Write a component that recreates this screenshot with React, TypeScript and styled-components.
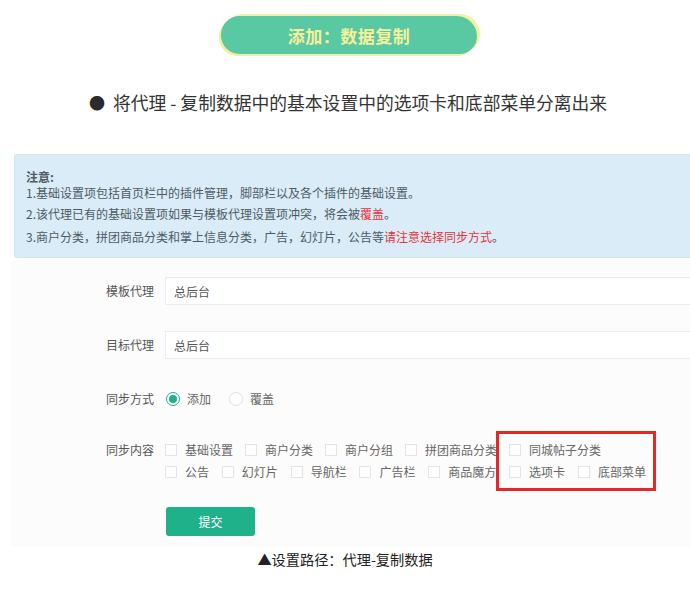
import React from 'react';
import styled, { createGlobalStyle } from 'styled-components';

const GlobalStyle = createGlobalStyle`
  html, body {
    margin: 0;
    padding: 0;
    background: #ffffff;
    overflow: hidden;
  }
  body {
    font-family: "Noto Sans CJK SC", "Noto Sans", sans-serif;
    color: #333;
  }
`;

type CheckItem = { name: string; id: number };

const rowOne: CheckItem[] = [
    { name: '基础设置', id: 1 },
    { name: '商户分类', id: 2 },
    { name: '商户分组', id: 3 },
    { name: '拼团商品分类', id: 4 },
    { name: '同城帖子分类', id: 5 },
];

const rowTwo: CheckItem[] = [
    { name: '公告', id: 6 },
    { name: '幻灯片', id: 7 },
    { name: '导航栏', id: 8 },
    { name: '广告栏', id: 9 },
    { name: '商品魔方', id: 10 },
    { name: '选项卡', id: 11 },
    { name: '底部菜单', id: 12 },
];

const App = () => {
    return (
        <Page>
            <GlobalStyle />
            <TitleWrap>
                <TitlePill>添加：数据复制</TitlePill>
            </TitleWrap>
            <Bullet><Dot>●</Dot>将代理 - 复制数据中的基本设置中的选项卡和底部菜单分离出来</Bullet>

            <Shot>
                <Notice>
                    <NoticeTitle>注意:</NoticeTitle>
                    <NoticeLine first>1.基础设置项包括首页栏中的插件管理，脚部栏以及各个插件的基础设置。</NoticeLine>
                    <NoticeLine>2.该代理已有的基础设置项如果与模板代理设置项冲突，将会被<Red>覆盖</Red>。</NoticeLine>
                    <NoticeLine>3.商户分类，拼团商品分类和掌上信息分类，广告，幻灯片，公告等<Red>请注意选择同步方式</Red>。</NoticeLine>
                </Notice>

                <Form>
                    <Row>
                        <Label>模板代理</Label>
                        <Input>总后台</Input>
                    </Row>
                    <Row>
                        <Label>目标代理</Label>
                        <Input>总后台</Input>
                    </Row>
                    <Row>
                        <Label>同步方式</Label>
                        <Choices>
                            <Radio checked />
                            <OptionText>添加</OptionText>
                            <Radio />
                            <OptionText>覆盖</OptionText>
                        </Choices>
                    </Row>
                    <Row top>
                        <Label>同步内容</Label>
                        <CheckGroup>
                            {[rowOne, rowTwo].map((line, i) => (
                                <CheckLine key={i} wide={i === 1}>
                                    {line.map(item => (
                                        <CheckItemBox key={item.id}>
                                            <Box />
                                            <OptionText>{item.name}</OptionText>
                                        </CheckItemBox>
                                    ))}
                                </CheckLine>
                            ))}
                        </CheckGroup>
                    </Row>
                    <Row>
                        <Label />
                        <Submit>提交</Submit>
                    </Row>
                    <Highlight />
                </Form>
            </Shot>

            <Caption>▲设置路径：代理-复制数据</Caption>
        </Page>
    );
};

const Page = styled.div`
  width: 690px;
  height: 590px;
  overflow: hidden;
  display: flex;
  flex-direction: column;
`;

const TitleWrap = styled.div`
  display: flex;
  justify-content: center;
  padding-top: 16px;
  padding-left: 8px;
`;

const TitlePill = styled.div`
  width: 256px;
  height: 38px;
  display: flex;
  align-items: center;
  justify-content: center;
  background: #58c9a3;
  border-radius: 20px 22px 19px 20px;
  box-shadow: 3px -2px 0 #f6efa0, -2px 2px 0 #f3ee9e;
  color: #f9f09a;
  font-size: 17px;
  font-weight: bold;
  letter-spacing: 0.5px;
`;

const Bullet = styled.div`
  margin-top: 36px;
  display: flex;
  justify-content: center;
  align-items: center;
  font-size: 17.8px;
  line-height: 24px;
  color: #333;
  padding-left: 6px;
`;

const Dot = styled.span`
  font-size: 16px;
  margin-right: 8px;
  color: #2b2b2b;
`;

const Shot = styled.div`
  margin-top: 40px;
  display: flex;
  flex-direction: column;
  width: 700px;
`;

const Notice = styled.div`
  margin-left: 14px;
  height: 104px;
  box-sizing: border-box;
  padding: 16px 11px 0;
  background: #d9ecf7;
  border: 1px solid #cfe6ee;
  border-radius: 3px;
  color: #4e5a63;
  font-size: 12px;
`;

const NoticeTitle = styled.div`
  font-weight: bold;
  line-height: 12px;
`;

const NoticeLine = styled.div<{ first?: boolean }>`
  line-height: ${({ first }) => (first ? '19px' : '23px')};
`;

const Red = styled.span`
  color: #e8323a;
`;

const Form = styled.div`
  position: relative;
  margin-left: 10px;
  background: #fcfcfc;
  padding: 19px 0 10px;
  display: flex;
  flex-direction: column;
  gap: 26px;
`;

const Row = styled.div<{ top?: boolean }>`
  display: flex;
  align-items: ${({ top }) => (top ? 'flex-start' : 'center')};
  gap: 11px;
  min-height: 28px;
`;

const Label = styled.div`
  width: 144px;
  flex-shrink: 0;
  text-align: right;
  font-size: 12px;
  line-height: 22px;
  color: #555;
`;

const Input = styled.div`
  flex: 1;
  height: 28px;
  box-sizing: border-box;
  border: 1px solid #ececec;
  background: #fff;
  padding-left: 8px;
  display: flex;
  align-items: center;
  font-size: 12px;
  color: #555;
`;

const Choices = styled.div`
  display: flex;
  align-items: center;
`;

const Radio = styled.span<{ checked?: boolean }>`
  width: 14px;
  height: 14px;
  box-sizing: border-box;
  border-radius: 50%;
  border: 1px solid ${({ checked }) => (checked ? '#1fb18a' : '#e2e2e2')};
  background: #fff;
  margin: 0 7px 0 1px;
  position: relative;
  &::after {
    content: '';
    display: ${({ checked }) => (checked ? 'block' : 'none')};
    position: absolute;
    left: 2px;
    top: 2px;
    width: 8px;
    height: 8px;
    border-radius: 50%;
    background: #1fb18a;
  }
  & + span + & {
    margin-left: 18px;
  }
`;

const OptionText = styled.span`
  font-size: 12px;
  line-height: 22px;
  color: #666;
`;

const CheckGroup = styled.div`
  display: flex;
  flex-direction: column;
`;

const CheckLine = styled.div<{ wide?: boolean }>`
  display: flex;
  align-items: center;
  height: 22px;
  gap: ${({ wide }) => (wide ? '12.8px' : '12px')};
`;

const CheckItemBox = styled.label`
  display: flex;
  align-items: center;
  gap: 8px;
`;

const Box = styled.span`
  width: 12px;
  height: 12px;
  box-sizing: border-box;
  border: 1px solid #e4e4e4;
  background: #fff;
`;

const Submit = styled.button`
  width: 89px;
  height: 29px;
  border: none;
  border-radius: 3px;
  background: #1fb18a;
  color: #fff;
  font-family: inherit;
  font-size: 12px;
  margin-left: 1px;
  margin-top: -4px;
`;

const Highlight = styled.div`
  position: absolute;
  left: 486px;
  top: 173px;
  width: 160px;
  height: 60px;
  box-sizing: border-box;
  border: 3px solid #e8262a;
`;

const Caption = styled.div`
  margin-top: 2px;
  text-align: center;
  font-size: 14.2px;
  color: #222;
  line-height: 20px;
`;

export default App;
